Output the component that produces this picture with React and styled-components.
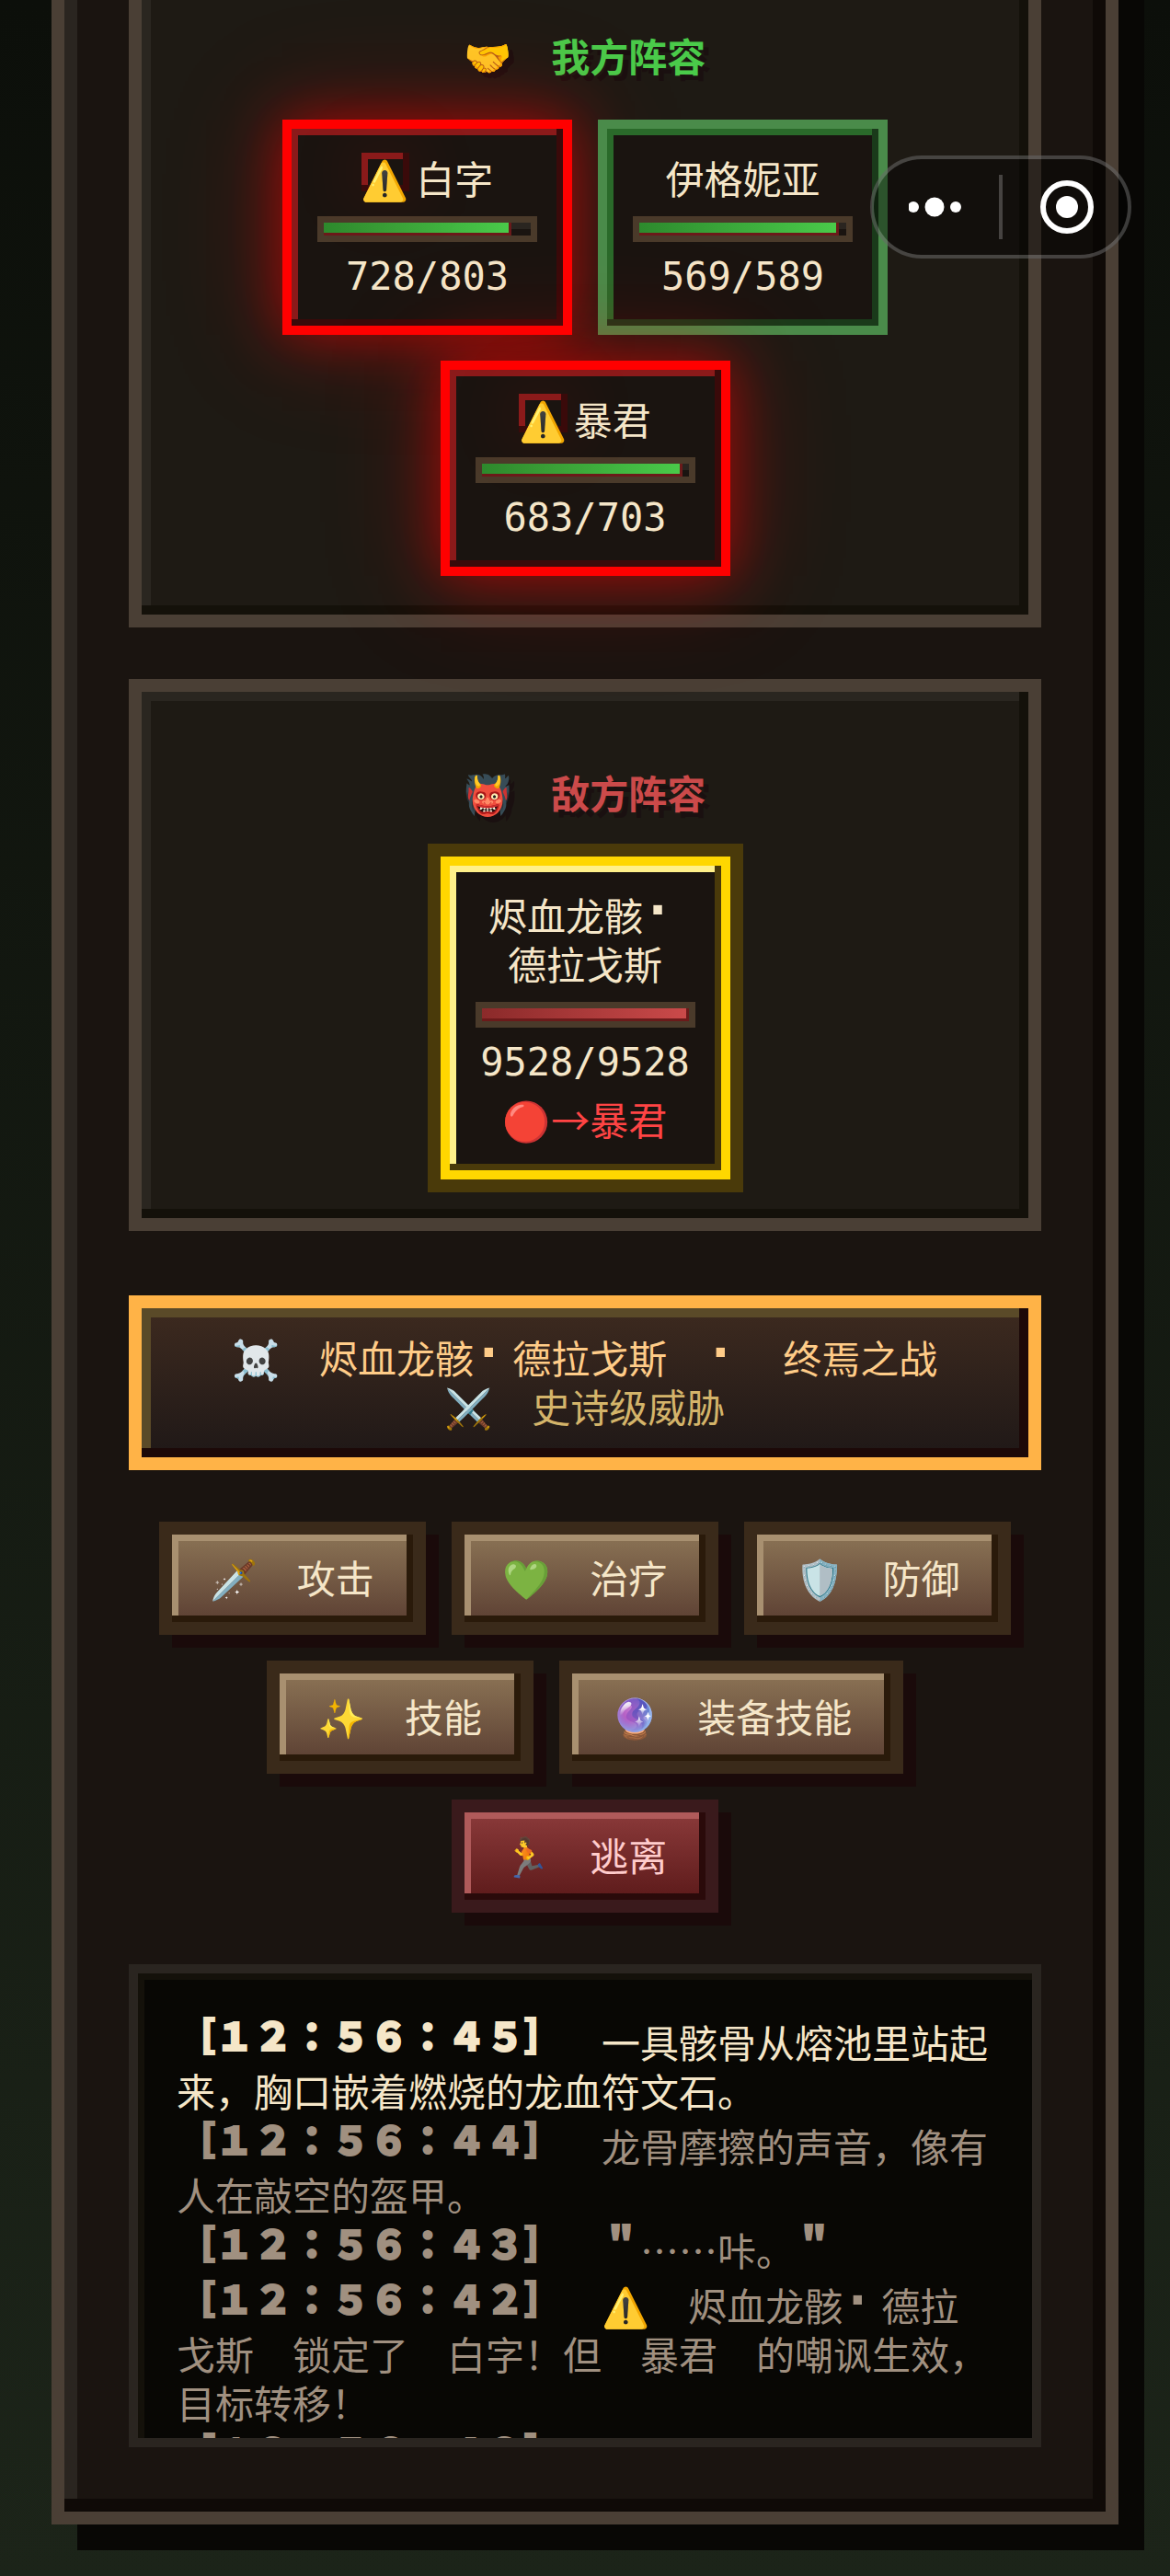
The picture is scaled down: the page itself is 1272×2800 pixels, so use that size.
import React from "react";
import styled, { createGlobalStyle, css } from "styled-components";

const cjk = `"Noto Sans CJK SC", "Noto Color Emoji", sans-serif`;

const GlobalStyle = createGlobalStyle`
  *, *::before, *::after { box-sizing: border-box; }
  body {
    margin: 0;
    background: #1c2419;
    color: #f5e6c8;
    font: 42px/53px ${cjk};
  }
`;

const bevel = (size, light, dark) => css`
  inset -${size}px -${size}px 0 ${dark}, inset ${size}px ${size}px 0 ${light}
`;

const Page = styled.div`
  position: relative;
  overflow: hidden;
  min-height: 100vh;
  padding: 0 56px;
  background: linear-gradient(180deg, #0c0f0a 0%, #1c2419 100%);
`;

const Frame = styled.main`
  margin: -147px 0 56px;
  padding: 70px;
  border: 14px solid #4a3f35;
  background: #1a1410;
  box-shadow: ${bevel(14, "#2a2520", "#0f0a07")}, 28px 28px 0 #080705;
`;

const Panel = styled.section`
  margin-bottom: 56px;
  padding: 42px;
  border: 14px solid #4a3f35;
  background: #1e1a14;
  box-shadow: ${bevel(10, "#2a2620", "#14110a")};
`;

const PanelTitle = styled.h2`
  margin: 0;
  padding: 40px 0 44px;
  color: ${(p) => p.$color};
  font-size: 42px;
  font-weight: 700;
  line-height: 53px;
  text-align: center;
  text-shadow: 6px 6px 0 #1a1010;
`;

const Roster = styled.div`
  display: flex;
  flex-wrap: wrap;
  justify-content: center;
  gap: 28px;
`;

const tones = {
  ally: { edge: "#4a8b4a", light: "#2a6a2a", dark: "#1a3a1a", glow: "" },
  danger: {
    edge: "#ff0000",
    light: "#8b1a1a",
    dark: "#3a0a0a",
    glow: ", 0 0 56px rgba(255, 0, 0, 0.5), 0 0 126px rgba(255, 0, 0, 0.25)",
  },
  boss: {
    edge: "#ffd700",
    light: "#fff08a",
    dark: "#4a3a0a",
    glow: ", 0 0 0 14px #4a3a0a",
  },
};

const Card = styled.article`
  width: 315px;
  padding: 26px 28px 27px;
  border: 10px solid ${(p) => tones[p.$tone].edge};
  background: #1a1410;
  box-shadow: ${(p) => bevel(7, tones[p.$tone].light, tones[p.$tone].dark)}
    ${(p) => tones[p.$tone].glow};
  text-align: center;
`;

const Name = styled.div`
  display: flex;
  justify-content: center;
  gap: 7px;
`;

const Warning = styled.span`
  height: 42px;
  background: #1a1410;
  box-shadow: ${bevel(7, "#8b1a1a", "#3a0a0a")},
    0 0 84px rgba(255, 0, 0, 0.2);
`;

const Track = styled.div`
  height: 28px;
  margin: 16px 0 11px;
  border: 7px solid #4a3a2a;
  background: #1a1410;
  box-shadow: inset 0 7px 0 #2a2520;
`;

const Fill = styled.div`
  height: 100%;
  background: ${(p) =>
    p.$foe
      ? "linear-gradient(90deg, #8b2a2a, #cb4a4a)"
      : "linear-gradient(90deg, #2d8a2d, #4acb4a)"};
  box-shadow: inset -3px -3px 0 #6b1a1a;
`;

const Points = styled.div`
  font-family: "DejaVu Sans Mono", monospace;
  white-space: nowrap;
`;

const Target = styled.div`
  padding: 8px 0 3px;
  color: #ff4444;
  white-space: nowrap;
`;

const Wide = styled.span`
  font-family: "Noto Sans CJK JP", sans-serif;
  font-feature-settings: "fwid";
  font-weight: 900;
  line-height: 1;
  vertical-align: 8px;
  -webkit-text-stroke: 2px currentColor;
`;

const Dot = styled.span`
  display: inline-block;
  width: 42px;
  padding-left: 6px;
  font-family: "DejaVu Sans", sans-serif;
  font-size: 53px;
  font-weight: 700;
  line-height: 42px;
  text-align: left;
  vertical-align: 4px;
`;

const Banner = styled.section`
  margin-top: 70px;
  padding: 26px 28px 30px;
  border: 14px solid #ffb347;
  background: linear-gradient(180deg, #3d2a1f, #1f1817);
  box-shadow: ${bevel(10, "#5a4a28", "#1c0908")};
  color: #ffcc88;
  text-align: center;
`;

const BannerLine = styled.div`
  height: 53px;
`;

const Threat = styled(BannerLine)`
  color: #d4b46a;
`;

const Actions = styled.div`
  display: flex;
  flex-wrap: wrap;
  justify-content: center;
  gap: 28px;
  margin: 56px 0;
`;

const Action = styled.button`
  margin: 14px;
  padding: 19px 42px 23px;
  border: 0;
  background: ${(p) =>
    p.$danger
      ? "linear-gradient(180deg, #8b3a3a, #5c1a1a)"
      : "linear-gradient(180deg, #8b7355, #5c4033)"};
  box-shadow: ${(p) =>
      p.$danger
        ? bevel(7, "#b05a5a", "#2a0a0a")
        : bevel(7, "#a89070", "#2a1a0a")},
    0 0 0 14px ${(p) => (p.$danger ? "#3a1a1c" : "#3a2a1a")},
    14px 14px 0 14px #1a0a0a;
  color: ${(p) => (p.$danger ? "#ffcccc" : "#f5e6c8")};
  font: inherit;
  cursor: pointer;
`;

const Log = styled.section`
  height: 525px;
  padding: 40px 42px 42px;
  overflow: hidden;
  border: 10px solid #2a2520;
  background: #080704;
  box-shadow: inset 7px 7px 0 #14110a;
`;

const Entry = styled.p`
  margin: 0;
  padding-top: 5px;
  color: ${(p) => (p.$latest ? "#f5e6c8" : "#a09080")};
`;

const Capsule = styled.div`
  position: absolute;
  top: 169px;
  right: 42px;
  display: grid;
  grid-template-columns: 1fr 4px 1fr;
  align-items: center;
  width: 284px;
  height: 112px;
  border: 4px solid rgba(255, 255, 255, 0.22);
  border-radius: 56px;
  background: rgba(0, 0, 0, 0.4);
`;

const CapsuleButton = styled.button`
  display: grid;
  place-items: center;
  height: 100%;
  padding: 0;
  border: 0;
  background: none;
  cursor: pointer;
`;

const Divider = styled.span`
  height: 70px;
  background: rgba(255, 255, 255, 0.22);
`;

const allies = [
  { name: "白字", hp: 728, max: 803, marked: true },
  { name: "伊格妮亚", hp: 569, max: 589 },
  { name: "暴君", hp: 683, max: 703, marked: true },
];

const actions = [
  { icon: "🗡️", label: "攻击" },
  { icon: "💚", label: "治疗" },
  { icon: "🛡️", label: "防御" },
  { icon: "✨", label: "技能" },
  { icon: "🔮", label: "装备技能" },
  { icon: "🏃", label: "逃离", danger: true },
];

const entries = [
  { time: "[12:56:45]", text: "一具骸骨从熔池里站起来，胸口嵌着燃烧的龙血符文石。" },
  { time: "[12:56:44]", text: "龙骨摩擦的声音，像有人在敲空的盔甲。" },
  {
    time: "[12:56:43]",
    text: (
      <>
        <Wide lang="ja">"</Wide>……咔。<Wide lang="ja">"</Wide>
      </>
    ),
  },
  {
    time: "[12:56:42]",
    text: (
      <>
        ⚠️　烬血龙骸<Dot>·</Dot>德拉戈斯　锁定了　白字！但　暴君　的嘲讽生效，目标转移！
      </>
    ),
  },
  { time: "[12:56:42]", text: "" },
];

function Health({ hp, max, foe }) {
  return (
    <>
      <Track>
        <Fill $foe={foe} style={{ width: `${(hp / max) * 100}%` }} />
      </Track>
      <Points>
        {hp}/{max}
      </Points>
    </>
  );
}

export default function App() {
  return (
    <>
      <GlobalStyle />
      <Page lang="zh-CN">
        <Frame>
          <Panel>
            <PanelTitle $color="#4acb4a">🤝　我方阵容</PanelTitle>
            <Roster>
              {allies.map((unit) => (
                <Card key={unit.name} $tone={unit.marked ? "danger" : "ally"}>
                  <Name>
                    {unit.marked && <Warning>⚠️</Warning>}
                    <span>{unit.name}</span>
                  </Name>
                  <Health hp={unit.hp} max={unit.max} />
                </Card>
              ))}
            </Roster>
          </Panel>

          <Panel>
            <PanelTitle $color="#cb4a4a">👹　敌方阵容</PanelTitle>
            <Roster>
              <Card $tone="boss">
                <div>
                  烬血龙骸<Dot>·</Dot>德拉戈斯
                </div>
                <Health hp={9528} max={9528} foe />
                <Target>🔴→暴君</Target>
              </Card>
            </Roster>
          </Panel>

          <Banner>
            <BannerLine>
              ☠️　烬血龙骸<Dot>·</Dot>德拉戈斯　<Dot>·</Dot>　终焉之战
            </BannerLine>
            <Threat>⚔️　史诗级威胁</Threat>
          </Banner>

          <Actions>
            {actions.map((a) => (
              <Action key={a.label} type="button" $danger={a.danger}>
                {a.icon}　{a.label}
              </Action>
            ))}
          </Actions>

          <Log aria-label="战斗记录">
            {entries.map((entry, i) => (
              <Entry key={i} $latest={i === 0}>
                <Wide lang="ja">{entry.time}</Wide>　{entry.text}
              </Entry>
            ))}
          </Log>
        </Frame>

        <Capsule>
          <CapsuleButton type="button" aria-label="更多">
            <svg width="60" height="24" viewBox="0 0 60 24" fill="#fff">
              <circle cx="5" cy="12" r="6" />
              <circle cx="28" cy="12" r="10.5" />
              <circle cx="51" cy="12" r="6" />
            </svg>
          </CapsuleButton>
          <Divider />
          <CapsuleButton type="button" aria-label="关闭">
            <svg width="64" height="64" viewBox="0 0 64 64">
              <circle cx="34" cy="32" r="26" fill="none" stroke="#fff" strokeWidth="6" />
              <circle cx="34" cy="32" r="12" fill="#fff" />
            </svg>
          </CapsuleButton>
        </Capsule>
      </Page>
    </>
  );
}
